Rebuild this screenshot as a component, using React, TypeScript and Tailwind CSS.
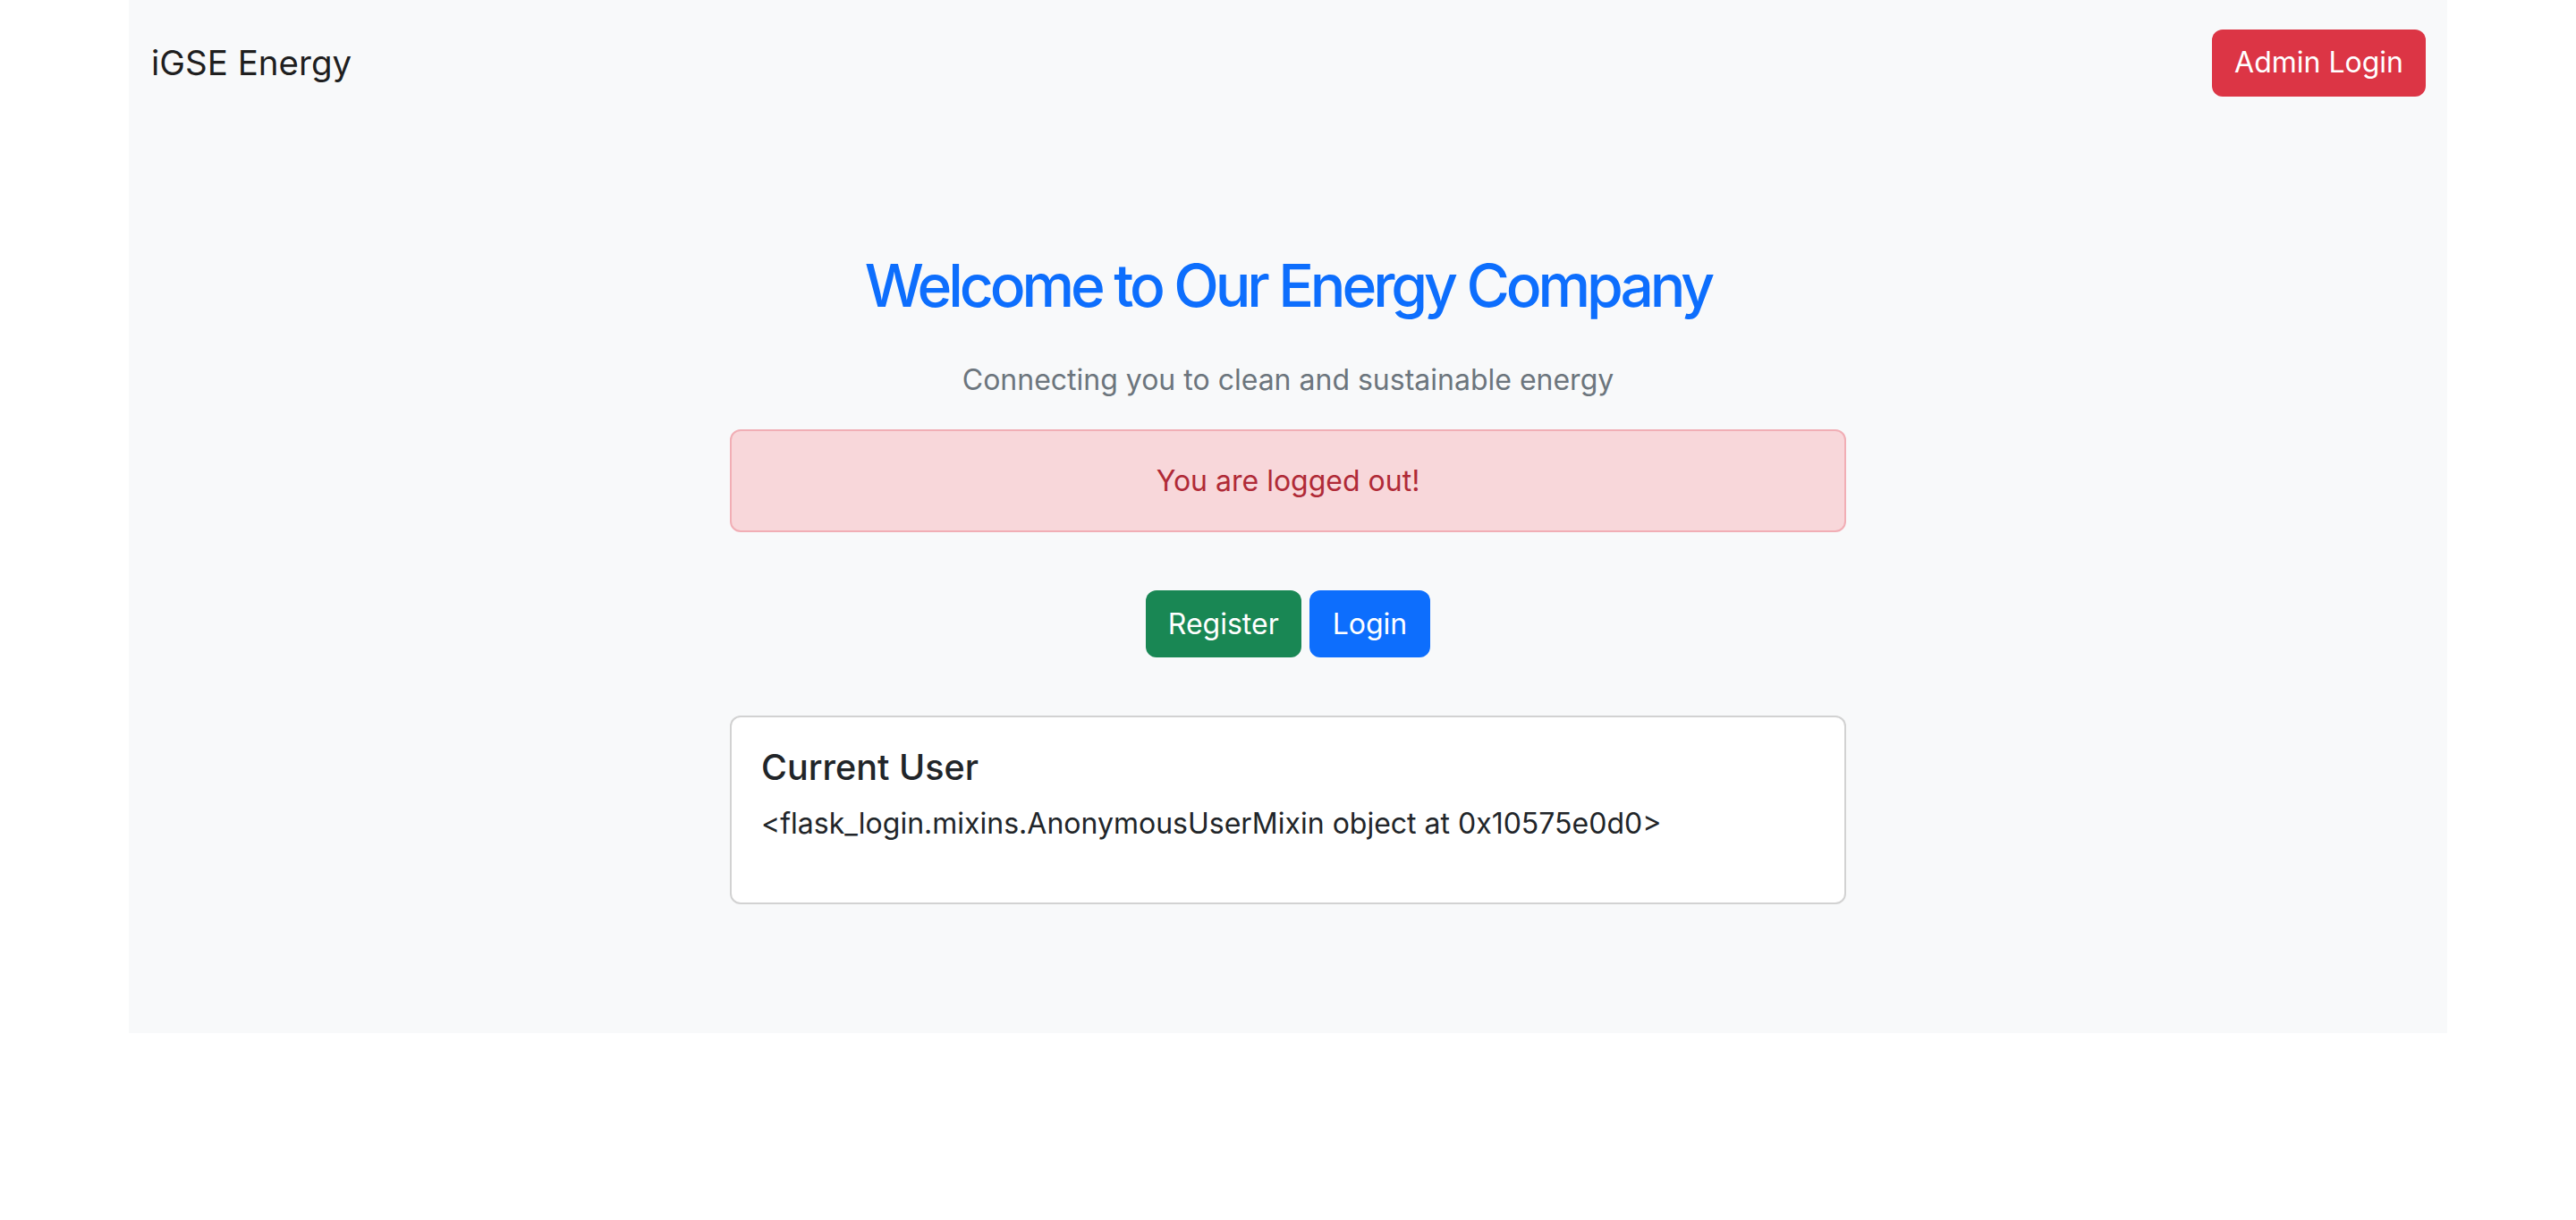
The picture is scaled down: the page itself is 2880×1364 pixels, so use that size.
export default function App() {
  return (
    <div className="w-full min-h-screen bg-white font-['Inter',sans-serif]">
      <div className="mx-auto w-[2592px] h-[1155px] bg-[#f8f9fa] flex flex-col">
        <nav className="flex items-center justify-between h-[140px] px-[25px] pr-[24px]">
          <span className="text-[38.5px] leading-[60px] text-black/90">iGSE Energy</span>
          <button className="h-[75px] px-[25px] rounded-[12px] bg-[#dc3545] text-white text-[32px] leading-[48px]">
            Admin Login
          </button>
        </nav>

        <main className="flex flex-col items-center">
          <h1 className="mt-[137px] text-[66px] leading-[84px] font-medium text-[#0d6efd] tracking-[-4.1px]">
            Welcome to Our Energy Company
          </h1>
          <p className="mt-[40px] text-[32px] leading-[48px] text-[#6c757d]">
            Connecting you to clean and sustainable energy
          </p>

          <div className="mt-[31px] w-[1248px] h-[115px] rounded-[12px] border-2 border-[#f1aeb5] bg-[#f8d7da] flex items-center justify-center">
            <span className="text-[32px] leading-[48px] text-[#b02a37]">You are logged out!</span>
          </div>

          <div className="mt-[65px] flex gap-[9px]">
            <button className="h-[75px] px-[25px] rounded-[12px] bg-[#198754] text-white text-[32px] leading-[48px]">
              Register
            </button>
            <button className="h-[75px] px-[26px] rounded-[12px] bg-[#0d6efd] text-white text-[32px] leading-[48px]">
              Login
            </button>
          </div>

          <div className="mt-[65px] w-[1248px] h-[211px] rounded-[12px] border-2 border-black/[0.175] bg-white px-[33px] pt-[33px]">
            <h5 className="text-[39.5px] leading-[46px] font-medium text-[#212529]">Current User</h5>
            <p className="mt-[16px] text-[32px] leading-[48px] text-[#212529]">
              &lt;flask_login.mixins.AnonymousUserMixin object at 0x10575e0d0&gt;
            </p>
          </div>
        </main>
      </div>
    </div>
  );
}
